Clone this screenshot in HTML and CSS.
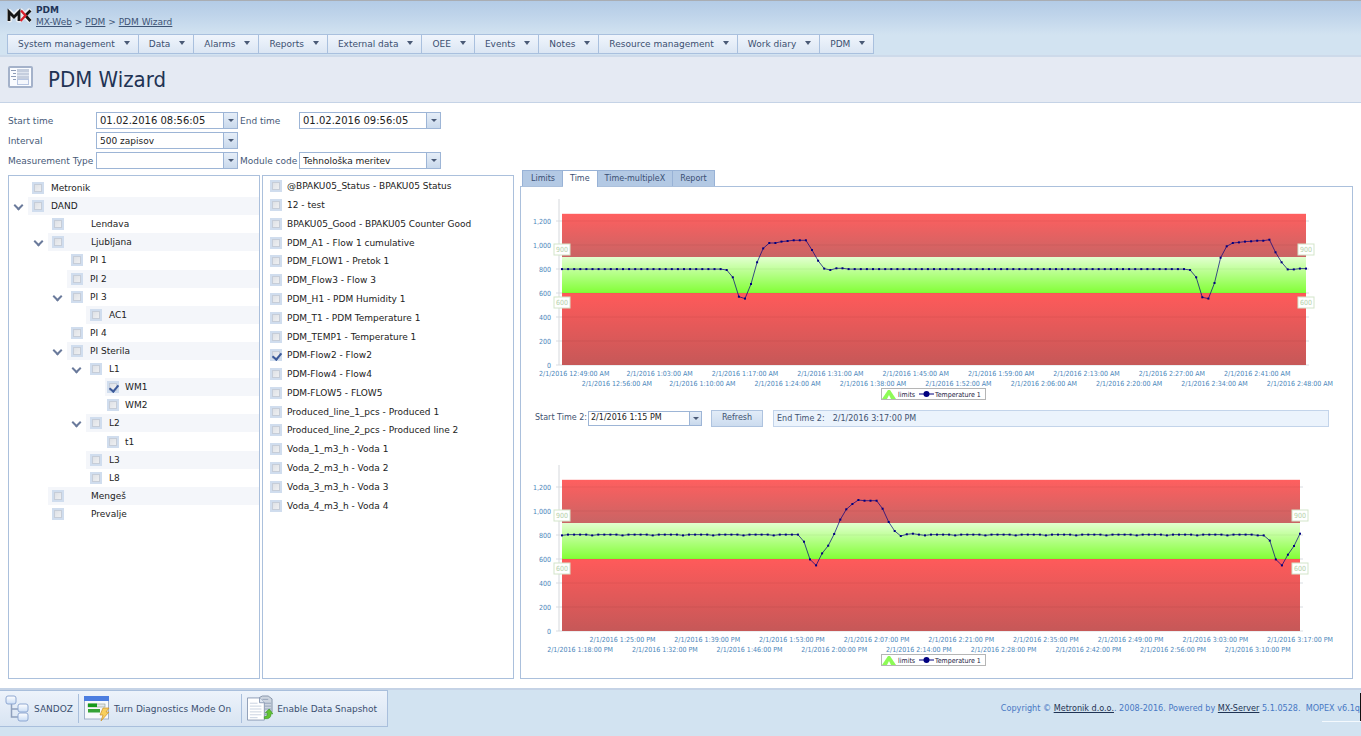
FILE: index.html
```html
<!DOCTYPE html>
<html lang="en">
<head>
<meta charset="utf-8">
<title>PDM Wizard</title>
<link rel="stylesheet" href="styles.css">
</head>
<body>
<header class="top">
  <div class="brand">
    <svg class="logo" viewBox="0 0 25 17" aria-label="MX">
      <g fill="none" stroke="#f4f4f4" stroke-width="5" stroke-linejoin="round" stroke-linecap="round" opacity=".8"><path d="M2.500 13V4.500l4.500 5L11.500 4.500v8.500M14 4l8 9M22 4l-9 9"/></g>
      <path d="M2 14V5l5 5 5-5v9" fill="none" stroke="#151515" stroke-width="2.800"/>
      <path d="M18.500 8.500L23.500 3.500M18.500 8.500l5 5.500" fill="none" stroke="#151515" stroke-width="2.800"/>
      <path d="M14 3.500l4.500 5-5 5.500" fill="none" stroke="#d8202c" stroke-width="2.400"/>
    </svg>
    <div>
      <div class="app">PDM</div>
      <nav class="crumbs"><a href="#">MX-Web</a> &gt; <a href="#">PDM</a> &gt; <a href="#">PDM Wizard</a></nav>
    </div>
  </div>
  <nav class="menu">
    <button>System management</button><button>Data</button><button>Alarms</button><button>Reports</button><button>External data</button><button>OEE</button><button>Events</button><button>Notes</button><button>Resource management</button><button>Work diary</button><button>PDM</button>
  </nav>
</header>
<div class="title">
  <svg class="title-icon" viewBox="0 0 25 22">
    <rect x="1" y="1" width="23" height="20" rx="1" fill="#fafcff" stroke="#a4b2ca" stroke-width="2"/>
    <path d="M3 4.500h5M5 7.500h3M3 10.500h5M5 13.500h3" stroke="#8d9cb8"/>
    <rect x="9" y="3" width="12" height="11" fill="#c5cede"/>
    <path d="M9 6.500h12M9 9.500h12" stroke="#dfe5ef"/>
    <rect x="9.500" y="13.500" width="11" height="5" fill="#f4f7fc" stroke="#b9c7e2"/>
  </svg>
  <h1>PDM Wizard</h1>
</div>
<main>
  <form class="filters">
    <label for="start">Start time</label>
    <span class="drop"><input id="start" class="date" value="01.02.2016 08:56:05"></span>
    <label for="end">End time</label>
    <span class="drop"><input id="end" class="date" value="01.02.2016 09:56:05"></span>
    <label for="interval">Interval</label>
    <span class="drop"><select id="interval"><option>500 zapisov</option></select></span>
    <span></span><span></span>
    <label for="mtype">Measurement Type</label>
    <span class="drop"><select id="mtype"><option></option></select></span>
    <label for="module">Module code</label>
    <span class="drop"><select id="module"><option>Tehnološka meritev</option></select></span>
  </form>
  <div class="columns">
    <section class="panel">
      <ul class="tree">
        <li class="l0"><label class="node"><input type="checkbox">Metronik</label></li>
        <li class="l0"><button class="exp" aria-label="Collapse DAND"></button><label class="node"><input type="checkbox">DAND</label></li>
        <li class="l1"><label class="node"><input type="checkbox">Lendava</label></li>
        <li class="l1"><button class="exp" aria-label="Collapse Ljubljana"></button><label class="node"><input type="checkbox">Ljubljana</label></li>
        <li class="l2"><label class="node"><input type="checkbox">PI 1</label></li>
        <li class="l2"><label class="node"><input type="checkbox">PI 2</label></li>
        <li class="l2"><button class="exp" aria-label="Collapse PI 3"></button><label class="node"><input type="checkbox">PI 3</label></li>
        <li class="l3"><label class="node"><input type="checkbox">AC1</label></li>
        <li class="l2"><label class="node"><input type="checkbox">PI 4</label></li>
        <li class="l2"><button class="exp" aria-label="Collapse PI Sterila"></button><label class="node"><input type="checkbox">PI Sterila</label></li>
        <li class="l3"><button class="exp" aria-label="Collapse L1"></button><label class="node"><input type="checkbox">L1</label></li>
        <li class="l4 selected"><label class="node"><input type="checkbox" checked>WM1</label></li>
        <li class="l4"><label class="node"><input type="checkbox">WM2</label></li>
        <li class="l3"><button class="exp" aria-label="Collapse L2"></button><label class="node"><input type="checkbox">L2</label></li>
        <li class="l4"><label class="node"><input type="checkbox">t1</label></li>
        <li class="l3"><label class="node"><input type="checkbox">L3</label></li>
        <li class="l3"><label class="node"><input type="checkbox">L8</label></li>
        <li class="l1"><label class="node"><input type="checkbox">Mengeš</label></li>
        <li class="l1"><label class="node"><input type="checkbox">Prevalje</label></li>
      </ul>
    </section>
    <section class="panel">
      <ul class="list">
        <li><label><input type="checkbox">@BPAKU05_Status - BPAKU05 Status</label></li>
        <li><label><input type="checkbox">12 - test</label></li>
        <li><label><input type="checkbox">BPAKU05_Good - BPAKU05 Counter Good</label></li>
        <li><label><input type="checkbox">PDM_A1 - Flow 1 cumulative</label></li>
        <li><label><input type="checkbox">PDM_FLOW1 - Pretok 1</label></li>
        <li><label><input type="checkbox">PDM_Flow3 - Flow 3</label></li>
        <li><label><input type="checkbox">PDM_H1 - PDM Humidity 1</label></li>
        <li><label><input type="checkbox">PDM_T1 - PDM Temperature 1</label></li>
        <li><label><input type="checkbox">PDM_TEMP1 - Temperature 1</label></li>
        <li><label><input type="checkbox" checked>PDM-Flow2 - Flow2</label></li>
        <li><label><input type="checkbox">PDM-Flow4 - Flow4</label></li>
        <li><label><input type="checkbox">PDM-FLOW5 - FLOW5</label></li>
        <li><label><input type="checkbox">Produced_line_1_pcs - Produced 1</label></li>
        <li><label><input type="checkbox">Produced_line_2_pcs - Produced line 2</label></li>
        <li><label><input type="checkbox">Voda_1_m3_h - Voda 1</label></li>
        <li><label><input type="checkbox">Voda_2_m3_h - Voda 2</label></li>
        <li><label><input type="checkbox">Voda_3_m3_h - Voda 3</label></li>
        <li><label><input type="checkbox">Voda_4_m3_h - Voda 4</label></li>
      </ul>
    </section>
    <section class="charts">
      <div class="tabs"><button>Limits</button><button class="active">Time</button><button>Time-multipleX</button><button>Report</button></div>
      <div class="panel chart-panel">
        <svg class="chart" id="chart1" viewBox="0 0 831 206"></svg>
        <form class="range">
          <label for="start2">Start Time 2:</label>
          <span class="drop"><input id="start2" value="2/1/2016 1:15 PM"></span>
          <button type="button">Refresh</button>
          <output><span>End Time 2:</span><span>2/1/2016 3:17:00 PM</span></output>
        </form>
        <svg class="chart" id="chart2" viewBox="0 0 831 206"></svg>
      </div>
    </section>
  </div>
</main>
<footer>
  <div class="actions">
    <button>
      <svg viewBox="0 0 26 28"><defs><linearGradient id="b" x2="0" y2="1"><stop offset="0" stop-color="#fff"/><stop offset="1" stop-color="#c9dcf5"/></linearGradient></defs>
        <path d="M6.500 8v14H14M6.500 14H14" fill="none" stroke="#8fa0bd" stroke-width="1.500"/>
        <g fill="url(#b)" stroke="#8fa8d2"><rect x="1" y="1" width="10" height="8" rx="2"/><rect x="13" y="9" width="10" height="8" rx="2"/><rect x="13" y="18" width="10" height="8" rx="2"/></g></svg>
      SANDOZ</button>
    <button class="wide">
      <svg viewBox="0 0 26 28"><rect x=".5" y="2" width="24" height="22" fill="#f7f9fc" stroke="#9fb0c8"/><rect x="0" y="1" width="25" height="5" fill="#4b7de0"/>
        <rect x="4" y="9" width="17" height="3" fill="#e4e8ee" stroke="#8a9a8a" stroke-width=".6"/><rect x="4" y="8.500" width="9" height="3.500" fill="#169a1c"/><rect x="4" y="14" width="12" height="3.500" fill="#35a336"/>
        <path d="M19 13h6l-3 4h3l-8 9 2-6h-3z" fill="#f8cf5c" stroke="#c98f2b" stroke-width=".7"/></svg>
      Turn Diagnostics Mode On</button>
    <button class="wide">
      <svg viewBox="0 0 27 28"><path d="M13 2l3-1.500h6l4 3V17l-6 3h-7z" fill="#cdd5e0" stroke="#8795ab"/><path d="M17 8h8M17 11h8M17 14h8M16 4h6" stroke="#94a2b8"/>
        <path d="M.5 2.500H13l5 5v18H.5z" fill="#fff" stroke="#8c9cb5"/><path d="M13 2.500v5h5" fill="#e1e8f2" stroke="#8c9cb5"/>
        <path d="M3 8h8M3 11h12M3 14h12M3 17h12M3 20h12M3 23h8" stroke="#bac6d8" stroke-width=".8"/>
        <path d="M18 22q4 0 3-4h-2l4-4 4 5h-2q0 6-7 5z" fill="#63c332" stroke="#2f8f1d" stroke-width=".6"/></svg>
      Enable Data Snapshot</button>
  </div>
  <p>Copyright © <a href="#">Metronik d.o.o.</a>. 2008-2016. Powered by <a href="#">MX-Server</a> 5.1.0528.&nbsp; MOPEX v6.1q</p>
</footer>
<script src="charts.js"></script>
</body>
</html>
```
FILE: styles.css
```css
* { box-sizing: border-box; }
body {
  margin: 0;
  min-height: 100vh;
  display: flex;
  flex-direction: column;
  background: #fff;
  color: #222;
  font: 9px/12px "DejaVu Sans", sans-serif;
}
button, input, select { font: inherit; color: inherit; margin: 0; padding: 0; border: 0; border-radius: 0; background: none; }
ul { list-style: none; margin: 0; padding: 0; }

.top {
  height: 57px;
  padding: 3px 7px 0;
  border-top: 1px solid #a9adb3;
  border-bottom: 2px solid #cddaea;
  background: linear-gradient(#b3cbe6, #bfd4ea 14px, #d2e3f1 34px);
  color: #3e5475;
}
.brand { display: flex; gap: 4px; height: 30px; }
.logo { width: 25px; height: 17px; margin-top: 3px; }
.app { font-weight: bold; color: #1f3558; }
.crumbs a { color: #3e5475; }
.menu { display: flex; }
.menu button {
  height: 20px;
  padding: 0 8px 0 10px;
  border: 1px solid #a9c0de;
  border-left-width: 0;
  background: linear-gradient(#f0f5fc, #dbe6f3);
  color: #3b4f70;
  white-space: nowrap;
}
.menu button:first-child { border-left-width: 1px; }
.menu button::after, .drop::after {
  content: "";
  display: inline-block;
  border: 3px solid transparent;
  border-top: 4px solid #4a5a76;
  border-bottom: 0;
}
.menu button::after { margin-left: 9px; vertical-align: 2px; }

.title {
  display: flex;
  align-items: flex-start;
  gap: 15px;
  height: 46px;
  padding: 9px 8px 0;
  background: #e5eaf3;
  border-bottom: 1px solid #c5d3e6;
}
.title-icon { width: 25px; height: 22px; }
h1 { margin: 0; font: 22px/28px "DejaVu Sans Condensed", "DejaVu Sans", sans-serif; color: #1f3354; }

main { flex: 1; display: flex; flex-direction: column; padding: 9px 8px; }
.filters {
  display: grid;
  grid-template-columns: 88px 142px 61px 142px;
  grid-auto-rows: 17px;
  row-gap: 3px;
  align-items: center;
  color: #465977;
}
.filters label { white-space: nowrap; }
.filters label:nth-of-type(2), .filters label:nth-of-type(5) { padding-left: 2px; }
.drop {
  display: flex;
  position: relative;
  height: 17px;
  border: 1px solid #9db5d6;
  background: #fff;
  color: #222;
}
.drop input, .drop select { flex: 1; min-width: 0; padding: 0 16px 0 3px; appearance: none; }
.drop .date { font-size: 10px; }
.drop::before {
  content: "";
  position: absolute;
  top: 0; right: 0; bottom: 0;
  width: 13px;
  border-left: 1px solid #9db5d6;
  background: linear-gradient(#e6eef8, #c9d9ec);
  pointer-events: none;
}
.drop::after { position: absolute; right: 3px; top: 6px; border-top-width: 3px; pointer-events: none; }

.columns { flex: 1; display: grid; grid-template-columns: 252px 252px 1fr; gap: 2px; margin-top: 1px; }
.columns > .panel { margin-top: 5px; }
.panel { border: 1px solid #abc0dc; background: #fff; }
.tree { display: grid; grid-auto-rows: 1fr; height: 344px; margin-top: 3px; }
.tree li { display: flex; position: relative; }
.node { flex: 1; display: flex; align-items: center; gap: 7px; padding-left: 4px; }
.tree li:nth-child(even) .node { background: #f4f6fa; }
.tree .selected .node { background: #fbebb2; }
.l0 { padding-left: 19px; }
.l1 { padding-left: 39px; }
.l1 .node { gap: 27px; }
.l2 { padding-left: 58px; }
.l3 { padding-left: 77px; }
.l4 { padding-left: 96px; }
.l4 .node { padding-left: 2px; gap: 6px; }
.exp { width: 14px; margin-left: -14px; position: relative; }
.exp::before {
  content: "";
  position: absolute;
  left: 1px; top: 5px;
  width: 5px; height: 5px;
  border: solid #6a7a9b;
  border-width: 0 2px 2px 0;
  transform: rotate(45deg);
}
input[type="checkbox"] {
  appearance: none;
  position: relative;
  flex: none;
  width: 12px; height: 12px;
  border: 2px solid #d0ddee;
  background: linear-gradient(135deg, #dcdfe4, #f1f2f4);
  outline: 1px solid #c6cdd8;
  outline-offset: -3px;
}
input[type="checkbox"]:checked::after {
  content: "";
  position: absolute;
  left: 2px; top: 0;
  width: 4px; height: 7px;
  border: solid #3c5a9a;
  border-width: 0 2px 2px 0;
  transform: rotate(40deg);
}
.list { display: grid; grid-auto-rows: 1fr; height: 338px; margin-top: 1px; }
.list label { display: flex; align-items: center; height: 100%; gap: 5px; padding-left: 7px; white-space: nowrap; }

.charts { display: flex; flex-direction: column; margin-left: 4px; }
.tabs { display: flex; padding-left: 2px; height: 16px; }
.tabs button {
  padding: 0 7px;
  border: 1px solid #98b2d6;
  border-width: 1px 1px 0 0;
  background: #b3c9e4;
  color: #3a4f73;
  font-size: 8px;
}
.tabs button:first-child { border-left-width: 1px; padding-left: 8px; }
.tabs .active { background: #fff; height: 17px; position: relative; }
.chart-panel { flex: 1; padding-top: 10px; font-size: 8px; }
.chart { display: block; width: 100%; font: 7px "DejaVu Sans Condensed", "DejaVu Sans", sans-serif; }
.range { display: flex; align-items: center; height: 30px; margin: 0 23px 30px 14px; color: #3f5270; }
.range .drop { width: 114px; height: 15px; margin: 0 9px 0 1px; }
.range .drop::before { width: 11px; }
.range .drop::after { right: 2px; top: 5px; }
.range .drop input { padding-left: 2px; }
.range button { width: 52px; height: 17px; border: 1px solid #aec3df; background: linear-gradient(#e2ecf8, #ccdcef); }
.range output { flex: 1; display: flex; gap: 8px; height: 17px; margin-left: 10px; padding-left: 3px; border: 1px solid #c3d4ea; background: #ebf3fc; line-height: 15px; }
.axis { fill: #4a86ba; }
.cap { fill: #b4d0a8; }
.key { fill: #222244; }

footer {
  position: relative;
  display: flex;
  justify-content: space-between;
  height: 48px;
  padding-right: 1px;
  border-top: 2px solid #c5d3e6;
  background: #d2e3f1;
}
.actions {
  display: flex;
  align-items: center;
  height: 37px;
  padding-left: 5px;
  border: 1px solid #a9bfdc;
  border-left: 0;
  background: linear-gradient(#edf3fb, #d8e4f2);
}
.actions button { display: flex; align-items: center; gap: 3px; height: 29px; padding-right: 5px; color: #3b4f70; white-space: nowrap; }
.actions button + button { border-left: 1px solid #a9bfdc; padding-left: 5px; }
.actions .wide { gap: 4px; padding-right: 10px; }
.actions svg { width: 26px; height: 28px; }
footer p { margin: 12px 0 0; font-family: "DejaVu Sans Condensed", "DejaVu Sans", sans-serif; color: #4878c4; white-space: nowrap; }
footer a { color: #1f3354; }
footer::after {
  content: "";
  position: absolute;
  right: 0; top: 3px;
  width: 39px; height: 28px;
  border-bottom: 1px solid #f4f9fd;
  background: linear-gradient(#111, #111) right / 1px 100% no-repeat;
}
```
FILE: charts.js
```js
// Limit charts: value axis 0-1260, one sample per minute.
const BASE = 168, LEFT = 41, SCALE = 0.12;
const y = v => BASE - v * SCALE;

function clock(total) {
  const h24 = Math.floor(total / 60), m = String(total % 60).padStart(2, "0");
  return `2/1/2016 ${h24 % 12 || 12}:${m}:00 ${h24 < 12 ? "AM" : "PM"}`;
}

function series(runs, wobble) {
  const out = Array.from({ length: 123 }, (_, i) => wobble && (i * 7) % 5 === 0 ? 797 : wobble ? 803 : 799);
  runs.forEach(([at, values]) => values.forEach((v, i) => { out[at + i] = v; }));
  return out;
}

function draw(id, right, start, first, firstRow, values) {
  const width = right - LEFT, step = width / 122;
  const rect = (a, b, fill) => `<rect x="${LEFT}" y="${y(a)}" width="${width}" height="${y(b) - y(a)}" fill="url(#${id}${fill})"/>`;
  const grad = (n, a, b) => `<linearGradient id="${id}${n}" x2="0" y2="1"><stop offset="0" stop-color="${a}"/><stop offset="1" stop-color="${b}"/></linearGradient>`;
  let s = `<defs>${grad("t", "#ff5f5f", "#c96464")}${grad("g", "#e2ffd0", "#82ff36")}${grad("r", "#ff5a5a", "#c65858")}</defs>`;
  for (let v = 0; v <= 1200; v += 200) s += `<path d="M35 ${y(v)}H${right + 3}" stroke="#d9dde2"/>`;
  s += `<path d="M38 2V${BASE}" stroke="#d5d8dc"/>`;
  s += rect(1260, 900, "t") + rect(900, 600, "g") + rect(600, 0, "r");
  for (let v = 200; v <= 1200; v += 200) {
    s += `<path d="M${LEFT} ${y(v)}H${right}" stroke="#000" stroke-opacity=".05"/>`;
  }
  for (let v = 0; v <= 1200; v += 200) s += `<text class="axis" text-anchor="end" x="30" y="${y(v) + 3}">${v.toLocaleString("en-US")}</text>`;
  const pts = values.map((v, i) => [LEFT + i * step, y(v)]);
  s += `<polyline points="${pts.map(p => p.map(n => n.toFixed(1)).join()).join(" ")}" fill="none" stroke="#000080" stroke-opacity=".7"/>`;
  s += pts.map(p => `<rect x="${(p[0] - 1).toFixed(1)}" y="${(p[1] - 1).toFixed(1)}" width="2" height="2" fill="#000080"/>`).join("");
  for (const x of [LEFT, right]) {
    for (const [v, cy] of [[900, 52], [600, 105]]) {
      s += `<rect x="${x - 8}" y="${cy - 5}" width="16" height="11" fill="#fff" stroke="#d3e5ca"/><text class="cap" text-anchor="middle" x="${x}" y="${cy + 3}">${v}</text>`;
    }
  }
  for (let m = first, row = firstRow; m <= 122; m += 7, row = 1 - row) {
    s += `<text class="axis" text-anchor="middle" x="${(LEFT + m * step).toFixed(1)}" y="${row ? 189 : 179}">${clock(start + m)}</text>`;
  }
  s += `<rect x="360.500" y="191.500" width="104" height="11" fill="#fff" stroke="#b5b5b5"/>
    <path d="M361 202l6-9h2l6 9z" fill="#8dfb56"/><path d="M366 202l2-4 2 4z" fill="#fff"/>
    <text class="key" x="377" y="200">limits</text>
    <path d="M398 197h15" stroke="#000080"/><circle cx="405.500" cy="197" r="3" fill="#000080"/>
    <text class="key" x="414" y="200">Temperature 1</text>`;
  document.getElementById(id).innerHTML = s;
}

draw("chart1", 785, 47, 2, 0, series([
  [27, [792, 731, 569, 553, 675, 856, 972, 1017, 1017, 1028, 1033, 1039, 1039, 1039, 958, 869, 803, 792, 806, 806]],
  [103, [792, 731, 564, 553, 683, 894, 989, 1017, 1022, 1028, 1031, 1036, 1036, 1044, 939, 856, 797, 797, 803, 803]]
], false));
draw("chart2", 779, 795, 3, 1, series([
  [40, [744, 597, 547, 647, 711, 808, 928, 1014, 1058, 1092, 1086, 1086, 1086, 1019, 908, 833, 792, 806, 811]],
  [116, [797, 753, 597, 547, 636, 708, 811]]
], true));
```
